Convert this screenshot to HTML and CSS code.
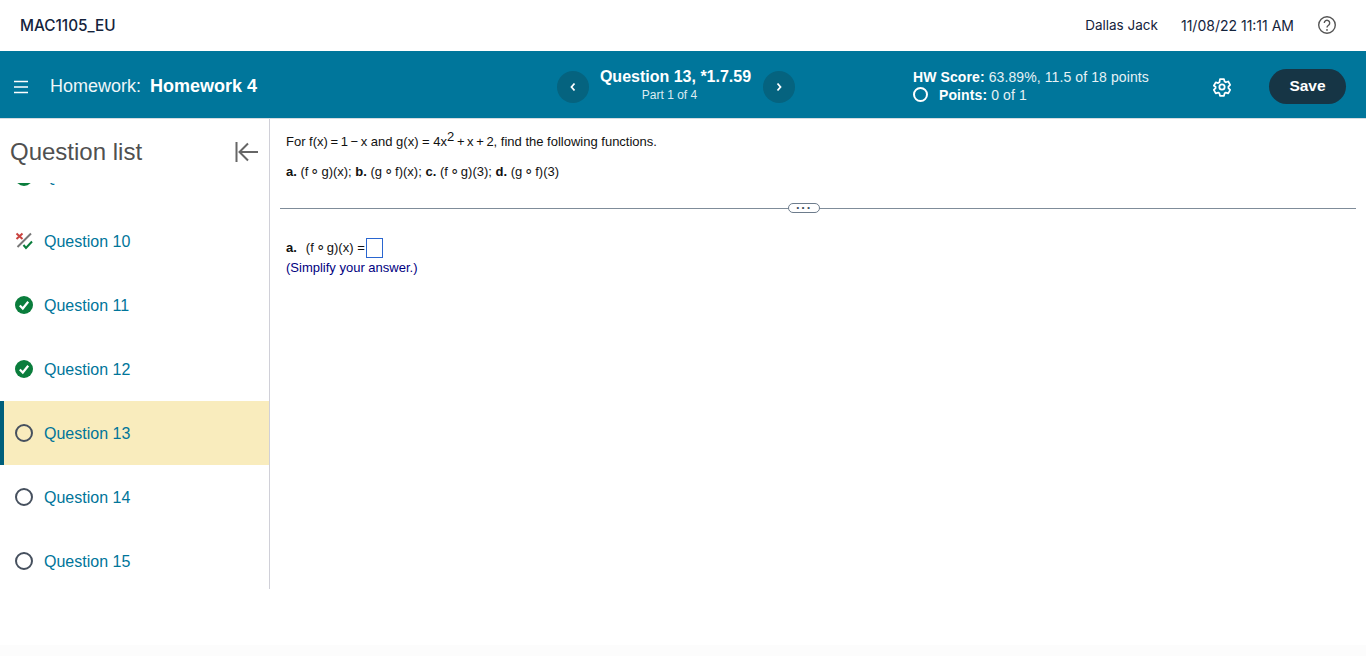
FILE: index.html
```html
<!DOCTYPE html>
<html lang="en">
<head>
<meta charset="utf-8">
<title>Homework 4</title>
<link rel="stylesheet" href="styles.css">
</head>
<body>
<header class="topbar">
  <div class="course">MAC1105_EU</div>
  <div class="top-right">
    <span class="user">Dallas Jack</span>
    <span class="date">11/08/22 11:11 AM</span>
    <svg class="help" width="20" height="20" viewBox="0 0 20 20"><circle cx="10" cy="10" r="8.3" fill="none" stroke="#555" stroke-width="1.4"/><path d="M7.3 8a2.700 2.700 0 1 1 4.300 2.200c-1 .7-1.600 1.100-1.600 2.300" fill="none" stroke="#555" stroke-width="1.4"/><circle cx="10" cy="14.900" r=".9" fill="#555"/></svg>
  </div>
</header>
<nav class="hwbar">
  <div class="hw-left">
    <svg class="menu" width="16" height="14" viewBox="0 0 16 14"><path d="M1 1.500h14M1 7h14M1 12.500h14" stroke="#fff" stroke-width="1.4" fill="none"/></svg>
    <span class="hw-title">Homework:</span>
    <strong class="hw-name">Homework 4</strong>
  </div>
  <div class="hw-center">
    <button class="round"><svg width="8" height="10" viewBox="0 0 8 10"><path d="M5.500 1.500 2.500 5l3 3.500" stroke="#fff" stroke-width="1.800" fill="none"/></svg></button>
    <div class="q-info">
      <div class="q-title">Question 13, *1.7.59</div>
      <div class="q-part">Part 1 of 4</div>
    </div>
    <button class="round"><svg width="8" height="10" viewBox="0 0 8 10"><path d="M2.500 1.500 5.500 5l-3 3.500" stroke="#fff" stroke-width="1.800" fill="none"/></svg></button>
  </div>
  <div class="hw-score">
    <div><b>HW Score:</b> 63.89%, 11.5 of 18 points</div>
    <div class="points"><span class="pt-ring"></span><b>Points:</b> 0 of 1</div>
  </div>
  <svg class="gear" width="20" height="20" viewBox="0 0 24 24" fill="none" stroke="#fff" stroke-width="2.100" stroke-linejoin="round"><circle cx="12" cy="12" r="3.200"/><path d="M9.600 2.500h4.800l.7 2.900 1.500.9 2.900-.9 2.300 4.100-2.100 2.100v1.800l2.100 2.100-2.300 4.100-2.900-.9-1.500.9-.7 2.900H9.600l-.7-2.900-1.500-.9-2.900.9-2.300-4.100 2.100-2.100v-1.800L2.200 10.500l2.300-4.100 2.900.9 1.500-.9z"/></svg>
  <button class="save">Save</button>
</nav>
<main class="content">
  <aside class="sidebar">
    <div class="side-head">
      <h2>Question list</h2>
      <svg width="24" height="22" viewBox="0 0 24 22" fill="none" stroke="#666" stroke-width="2"><path d="M1.500 1v20M23 11H5M13 2.500 4.500 11l8.500 8.500"/></svg>
    </div>
    <div class="q-clip">
      <ul class="q-list">
        <li class="q-row"><svg class="ico" width="18" height="18" viewBox="0 0 18 18"><circle cx="9" cy="9" r="9" fill="#0a7d3c"/></svg><a>Question 9</a></li>
        <li class="q-row"><svg class="ico" width="18" height="18" viewBox="0 0 18 18" fill="none"><path d="M1.500 1.500 7.500 7M7.500 1.500 1.500 7" stroke="#c9423f" stroke-width="2"/><path d="M2.500 15 16 1.500" stroke="#777" stroke-width="2"/><path d="M8.500 13 11 16 17 9.500" stroke="#0a7d3c" stroke-width="2"/></svg><a>Question 10</a></li>
        <li class="q-row"><svg class="ico" width="18" height="18" viewBox="0 0 18 18"><circle cx="9" cy="9" r="9" fill="#0a7d3c"/><path d="M4.800 9.500 7.800 12.500 13.200 5.800" stroke="#fff" stroke-width="2.200" fill="none"/></svg><a>Question 11</a></li>
        <li class="q-row"><svg class="ico" width="18" height="18" viewBox="0 0 18 18"><circle cx="9" cy="9" r="9" fill="#0a7d3c"/><path d="M4.800 9.500 7.800 12.500 13.200 5.800" stroke="#fff" stroke-width="2.200" fill="none"/></svg><a>Question 12</a></li>
        <li class="q-row active"><span class="ring"></span><a>Question 13</a></li>
        <li class="q-row"><span class="ring"></span><a>Question 14</a></li>
        <li class="q-row"><span class="ring"></span><a>Question 15</a></li>
      </ul>
    </div>
  </aside>
  <section class="problem">
    <div class="stem">
      <p>For f(x)&thinsp;=&thinsp;1&thinsp;−&thinsp;x and g(x) = 4x<sup>2</sup>&thinsp;+&thinsp;x&thinsp;+&thinsp;2, find the following functions.</p>
      <p class="parts"><b>a.</b> (f<span class="comp">∘</span>g)(x); <b>b.</b> (g<span class="comp">∘</span>f)(x); <b>c.</b> (f<span class="comp">∘</span>g)(3); <b>d.</b> (g<span class="comp">∘</span>f)(3)</p>
    </div>
    <div class="divider"><span class="grip">···</span></div>
    <div class="answer">
      <div class="ans-line"><b>a.</b><span class="gap">(f<span class="comp">∘</span>g)(x) =</span><span class="box"></span></div>
      <div class="hint">(Simplify your answer.)</div>
    </div>
  </section>
</main>
</body>
</html>
```

FILE: styles.css
```css
* { box-sizing: border-box; }
html, body { margin: 0; height: 656px; overflow: hidden; background: #fff; }
body { font-family: "Liberation Sans", Arial, sans-serif; background: linear-gradient(#fff 645px, #fcfcfc 645px); }
.topbar { height: 51px; display: flex; align-items: center; justify-content: space-between; padding: 0 29px 1px 20px; font-family: Inter, sans-serif; font-size: 14px; color: #14233c; background: #fff; }
.course { font-weight: 500; font-size: 15.3px; }
.top-right { display: flex; align-items: center; }
.user { margin-right: 23px; font-size: 13.5px; }
.date { margin-right: 23px; }
.help { display: block; }
.hwbar { height: 68px; background: #00769b; border-bottom: 1px solid #d5dbe0; padding-top: 4px; display: flex; align-items: center; color: #fff; }
.hw-left { width: 557px; padding-left: 13px; display: flex; align-items: center; font-size: 18px; }
.menu { margin-right: 21px; }
.hw-title { margin-right: 9px; color: #eef6f9; }
.hw-name { font-weight: 700; }
.hw-center { width: 238px; display: flex; align-items: center; justify-content: space-between; }
.round { width: 32px; height: 32px; border-radius: 50%; border: 0; padding: 0; background: #05637f; display: flex; align-items: center; justify-content: center; }
.q-info { text-align: center; margin: 0 1px 4px 0; }
.q-title { font-size: 16px; font-weight: 700; line-height: 20px; }
.q-part { font-size: 12px; line-height: 16px; color: #dcecf2; padding-right: 12px; }
.hw-score { margin: 0 0 2px 118px; width: 299px; font-size: 14px; line-height: 18px; letter-spacing: .1px; color: #e6f1f5; }
.hw-score b { color: #fff; }
.points { display: flex; align-items: center; }
.points b { margin-right: 4px; }
.pt-ring { width: 15px; height: 15px; border: 2px solid #fff; border-radius: 50%; margin-right: 11px; }
.gear { display: block; }
.save { margin-left: 37px; width: 77px; height: 35px; padding: 0 0 2px; border-radius: 18px; border: 0; background: #163545; color: #fff; font: 700 15.5px "Liberation Sans", Arial, sans-serif; }
.content { display: flex; align-items: flex-start; }
.sidebar { width: 270px; height: 470px; border-right: 1px solid #d0d0d8; }
.side-head { height: 64px; padding: 2px 10px 0; display: flex; align-items: center; justify-content: space-between; }
.side-head h2 { margin: 0; font-size: 24px; font-weight: 400; color: #505050; }
.q-clip { height: 406px; overflow: hidden; }
.q-list { list-style: none; margin: -38px 0 0; padding: 0; }
.q-row { height: 64px; display: flex; align-items: center; padding-left: 15px; font-size: 16px; color: #00759a; }
.q-row a { margin-left: 11px; padding-top: 2px; }
.q-row:first-child a { padding-top: 0; }
.q-row.active { background: #f9ecbd; box-shadow: inset 4px 0 0 #005f7b; }
.ico { display: block; }
.ring { width: 18px; height: 18px; border-radius: 50%; border: 2px solid #46505e; }
.problem { flex: 1; padding: 0 10px; font-size: 13px; color: #111; }
.stem { padding: 15px 6px 0; height: 89px; }
.stem p { margin: 0; line-height: 16px; }
.stem sup { font-size: 13px; line-height: 0; vertical-align: 5px; }
.stem .parts { margin-top: 14px; }
.comp { font-size: 15px; line-height: 0; margin: 0 2px; }
.divider { height: 1px; background: #7f8c99; position: relative; }
.grip { position: absolute; top: -5px; left: 508px; width: 32px; height: 10px; background: #fff; border: 1px solid #6d7c8c; border-radius: 5px; font-size: 13px; font-weight: 700; letter-spacing: 1px; line-height: 7px; text-align: center; color: #44525f; }
.answer { padding: 29px 6px 0; }
.ans-line { display: flex; align-items: center; line-height: 20px; }
.gap { margin-left: 9px; width: 57px; white-space: nowrap; }
.box { display: block; flex: none; width: 17px; height: 20px; border: 1px solid #2a66d0; margin-left: 3px; }
.hint { color: #000080; line-height: 18px; padding-top: 1px; }
```
